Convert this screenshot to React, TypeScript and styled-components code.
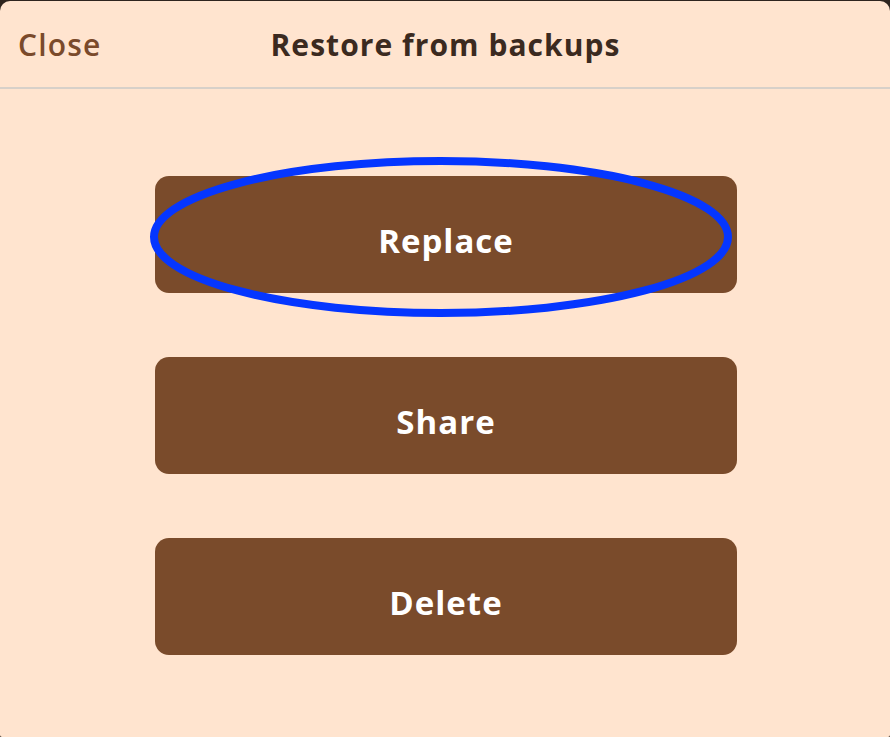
import React from "react";
import styled, { createGlobalStyle } from "styled-components";

const Global = createGlobalStyle`
  html, body { margin: 0; padding: 0; background: #2e241e; }
  body { font-family: "Open Sans", "Noto Sans", sans-serif; }
`;

const Sheet = styled.div`
  margin-top: 1px;
  height: 736px;
  background: #ffe4cf;
  border-radius: 10px 10px 2px 2px;
  display: flex;
  flex-direction: column;
  overflow: hidden;
`;

const Header = styled.div`
  height: 88px;
  box-sizing: border-box;
  border-bottom: 2px solid #d7d0c9;
  display: grid;
  grid-template-columns: 1fr auto 1fr;
  align-items: center;
  padding: 0 17px 0 18px;
`;

const CloseLink = styled.button`
  justify-self: start;
  background: none;
  border: none;
  padding: 0;
  font-family: inherit;
  font-weight: 600;
  font-size: 30px;
  letter-spacing: 1.2px;
  color: #7a4a2b;
  cursor: pointer;
`;

const Title = styled.h1`
  margin: 0;
  font-size: 30px;
  font-weight: 700;
  letter-spacing: 1.05px;
  color: #3b2a20;
`;

const Body = styled.div`
  display: flex;
  flex-direction: column;
  align-items: center;
  gap: 64px;
  padding: 87px 0 0 2px;
`;

const ButtonWrap = styled.div`
  position: relative;
`;

const ActionButton = styled.button`
  width: 582px;
  height: 117px;
  box-sizing: border-box;
  padding: 12px 0 0;
  border: none;
  border-radius: 14px;
  background: #7a4b2b;
  color: #ffffff;
  font-family: inherit;
  font-weight: 700;
  font-size: 33px;
  letter-spacing: 1px;
  cursor: pointer;
`;

const Highlight = styled.svg`
  position: absolute;
  left: -5px;
  top: -19px;
  width: 582px;
  height: 160px;
  overflow: visible;
  pointer-events: none;
`;

export default function App() {
  return (
    <>
      <Global />
      <Sheet>
        <Header>
          <CloseLink>Close</CloseLink>
          <Title>Restore from backups</Title>
          <span />
        </Header>
        <Body>
          <ButtonWrap>
            <ActionButton>Replace</ActionButton>
            <Highlight viewBox="0 0 582 160">
              <ellipse cx="291" cy="80" rx="287" ry="76" fill="none" stroke="#0536ff" strokeWidth="8" />
            </Highlight>
          </ButtonWrap>
          <ActionButton>Share</ActionButton>
          <ActionButton>Delete</ActionButton>
        </Body>
      </Sheet>
    </>
  );
}
